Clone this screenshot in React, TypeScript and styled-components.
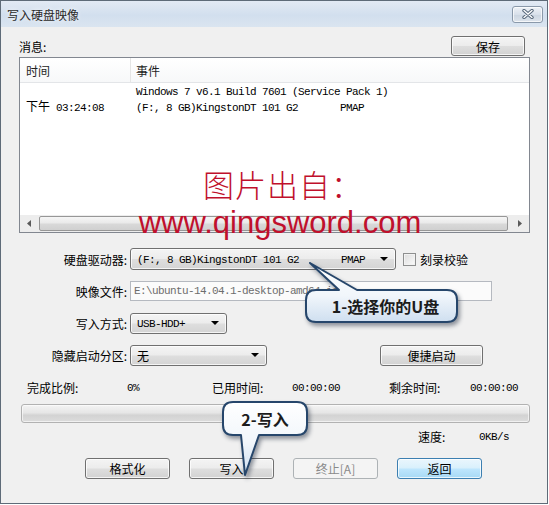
import React from "react";
import styled, { createGlobalStyle, css } from "styled-components";

const GlobalStyle = createGlobalStyle`
  html, body {
    margin: 0;
    padding: 0;
    background: #ffffff;
  }
  body {
    font-family: "Noto Sans CJK SC", "Liberation Sans", sans-serif;
    font-size: 12px;
    color: #000;
  }
  * {
    box-sizing: border-box;
  }
`;

const mono = css`
  font-family: "Liberation Mono", "Noto Sans CJK SC", monospace;
  font-size: 11px;
  letter-spacing: -0.6px;
  white-space: pre;
`;

const Window = styled.div`
  position: relative;
  width: 548px;
  height: 504px;
  border: 1px solid #5e6b78;
  background: #f0f0f0;
  display: flex;
  flex-direction: column;
  overflow: hidden;
`;

const TitleBar = styled.div`
  height: 26px;
  flex: none;
  display: flex;
  align-items: center;
  justify-content: space-between;
  padding: 0 4px 0 6px;
  background: linear-gradient(to bottom, #e2eaf4 0%, #d2dfee 55%, #dae5f0 100%);
`;

const TitleText = styled.span`
  font-size: 12px;
  color: #2a2a2a;
  text-shadow: 0 0 4px #ffffff;
`;

const CloseButton = styled.div`
  width: 31px;
  height: 17px;
  border: 1px solid #8a99aa;
  border-radius: 3px;
  background: linear-gradient(to bottom, #eef2f7, #d8e0ea 50%, #cbd5e1 51%, #dde4ec);
  display: flex;
  align-items: center;
  justify-content: center;
  box-shadow: inset 0 0 0 1px rgba(255, 255, 255, 0.7);
`;

const Body = styled.div`
  flex: 1;
  display: flex;
  flex-direction: column;
  padding: 9px 17px 0 18px;
`;

const HeaderRow = styled.div`
  height: 20px;
  display: flex;
  align-items: center;
  justify-content: space-between;
  padding-right: 5px;
`;

type ButtonKind = "normal" | "focused" | "disabled";

const Button = styled.div<{ $width: number; $height?: number; $kind?: ButtonKind; $offset?: number }>`
  width: ${p => p.$width}px;
  height: ${p => p.$height ?? 21}px;
  margin-left: ${p => p.$offset ?? 0}px;
  display: flex;
  align-items: center;
  justify-content: center;
  font-size: 12px;
  border-radius: 3px;
  border: 1px solid #707070;
  color: #000;
  background: linear-gradient(to bottom, #f4f4f4 0%, #ececec 48%, #dedede 52%, #d2d2d2 100%);
  box-shadow: inset 0 0 0 1px rgba(255, 255, 255, 0.75);
  ${p => p.$kind === "focused" && css`
    border-color: #3c7fb1;
    background: linear-gradient(to bottom, #eaf6fd 0%, #d9f0fc 48%, #bee6fd 52%, #a7d9f5 100%);
  `}
  ${p => p.$kind === "disabled" && css`
    border-color: #adb2b5;
    background: #f4f4f4;
    color: #8a8a8a;
    box-shadow: none;
  `}
`;

const ListBox = styled.div`
  margin-top: 1px;
  height: 176px;
  border: 1px solid #828790;
  background: #ffffff;
  display: flex;
  flex-direction: column;
`;

const ListHeader = styled.div`
  height: 25px;
  display: grid;
  grid-template-columns: 110px 1fr;
  background: linear-gradient(to bottom, #ffffff, #f7f8f9);
  border-bottom: 1px solid #e3e5e8;
`;

const HeaderCell = styled.div<{ $divider?: boolean }>`
  display: flex;
  align-items: center;
  padding-left: ${p => (p.$divider ? 5 : 6)}px;
  border-left: ${p => (p.$divider ? "1px solid #e5e5e5" : "none")};
  color: #1e1e1e;
`;

const ListContent = styled.div`
  flex: 1;
  padding-top: 1px;
`;

const LogRow = styled.div`
  display: grid;
  grid-template-columns: 111px 1fr;
  line-height: 16px;
`;

const TimeCell = styled.div`
  ${mono};
  align-self: end;
  padding-left: 6px;
`;

const TimeWord = styled.span`
  font-family: "Noto Sans CJK SC", sans-serif;
  font-size: 12px;
  letter-spacing: 0;
`;

const EventCell = styled.div`
  ${mono};
  padding-left: 5px;
`;

const HScroll = styled.div`
  height: 17px;
  display: flex;
  align-items: stretch;
  background: #ededed;
  padding: 0 1px;
`;

const ScrollArrow = styled.div`
  width: 17px;
  display: flex;
  align-items: center;
  justify-content: center;
`;

const ScrollThumb = styled.div`
  flex: 1;
  margin: 1px 3px 1px 1px;
  border: 1px solid #979797;
  border-radius: 2px;
  background: linear-gradient(to bottom, #f6f6f6 0%, #e9e9e9 48%, #d9d9d9 52%, #d0d0d0 100%);
`;

const FormRow = styled.div<{ $gap: number }>`
  margin-top: ${p => p.$gap}px;
  height: 22px;
  display: flex;
  align-items: center;
`;

const Label = styled.div`
  width: 108px;
  margin-right: 3px;
  text-align: right;
`;

const Combo = styled.div<{ $width: number; $height: number }>`
  width: ${p => p.$width}px;
  height: ${p => p.$height}px;
  display: flex;
  align-items: center;
  justify-content: space-between;
  padding: 0 7px 0 6px;
  border: 1px solid #707070;
  border-radius: 3px;
  background: linear-gradient(to bottom, #f4f4f4 0%, #ececec 48%, #dedede 52%, #d4d4d4 100%);
  box-shadow: inset 0 0 0 1px rgba(255, 255, 255, 0.75);
`;

const ComboText = styled.span<{ $mono?: boolean }>`
  ${p => p.$mono && mono};
  padding-top: 1px;
`;

const ComboArrow = styled.span`
  width: 0;
  height: 0;
  border-left: 4px solid transparent;
  border-right: 4px solid transparent;
  border-top: 4px solid #000;
`;

const Check = styled.div`
  width: 13px;
  height: 13px;
  margin: 0 4px 0 7px;
  border: 1px solid #8e8f8f;
  background: linear-gradient(135deg, #dcdcdc, #fbfbfb);
  box-shadow: inset 0 0 0 1px #f2f2f2;
`;

const PathInput = styled.div`
  ${mono};
  width: 362px;
  height: 20px;
  display: flex;
  align-items: center;
  padding-left: 3px;
  border: 1px solid #b5b9c0;
  background: #fbfbfb;
  color: #6d6d6d;
  overflow: hidden;
`;

const StatsRow = styled.div<{ $gap: number; $cols: string; $indent: number }>`
  margin-top: ${p => p.$gap}px;
  height: 16px;
  padding-left: ${p => p.$indent}px;
  display: grid;
  grid-template-columns: ${p => p.$cols};
  align-items: center;
`;

const Value = styled.span`
  ${mono};
`;

const Progress = styled.div`
  margin: 9px 0 0 2px;
  height: 19px;
  border: 1px solid #b2b2b2;
  border-radius: 3px;
  background: linear-gradient(to bottom, #f4f4f4 0%, #e6e6e6 45%, #d3d3d3 60%, #dcdcdc 100%);
  box-shadow: inset 0 0 0 1px rgba(255, 255, 255, 0.6);
`;

const ButtonRow = styled.div`
  margin: 14px 0 0 66px;
  display: flex;
  gap: 19px;
`;

const Watermark = styled.div`
  position: absolute;
  left: 134px;
  top: 160px;
  width: 290px;
  display: flex;
  flex-direction: column;
  align-items: center;
  color: #c0102c;
  pointer-events: none;
`;

const WatermarkTitle = styled.div`
  font-family: "Noto Sans CJK SC", sans-serif;
  font-size: 31px;
  font-weight: 300;
  line-height: 46px;
  padding-left: 6px;
  letter-spacing: 1px;
`;

const WatermarkUrl = styled.div`
  font-family: "Liberation Sans", Arial, sans-serif;
  font-size: 31px;
  line-height: 31px;
`;

const CalloutWrap = styled.div<{ $x: number; $y: number; $w: number; $h: number }>`
  position: absolute;
  left: ${p => p.$x}px;
  top: ${p => p.$y}px;
  width: ${p => p.$w}px;
  height: ${p => p.$h}px;
  pointer-events: none;

  svg {
    position: absolute;
    inset: 0;
    overflow: visible;
    filter: drop-shadow(2px 3px 2px rgba(20, 30, 50, 0.45));
  }
`;

const CalloutText = styled.div<{ $box: [number, number, number, number] }>`
  position: absolute;
  left: ${p => p.$box[0]}px;
  top: ${p => p.$box[1]}px;
  width: ${p => p.$box[2]}px;
  height: ${p => p.$box[3]}px;
  display: flex;
  align-items: center;
  justify-content: center;
  font-family: "Noto Sans CJK SC", "Liberation Sans", sans-serif;
  font-size: 16px;
  font-weight: 700;
  color: #1c1c1c;
`;

const Callout: React.FC<{
  x: number;
  y: number;
  w: number;
  h: number;
  path: string;
  box: [number, number, number, number];
  id: string;
  children: React.ReactNode;
}> = ({ x, y, w, h, path, box, id, children }) => (
  <CalloutWrap $x={x} $y={y} $w={w} $h={h}>
    <svg width={w} height={h} viewBox={`0 0 ${w} ${h}`}>
      <defs>
        <linearGradient id={id} x1="0" y1="0" x2="0" y2="1">
          <stop offset="0" stopColor="#ffffff" />
          <stop offset="0.55" stopColor="#f1f6fb" />
          <stop offset="1" stopColor="#cfdff0" />
        </linearGradient>
      </defs>
      <path d={path} fill={`url(#${id})`} stroke="#26466b" strokeWidth="2" strokeLinejoin="round" />
    </svg>
    <CalloutText $box={box}>{children}</CalloutText>
  </CalloutWrap>
);

export default function App() {
  return (
    <>
      <GlobalStyle />
      <Window>
        <TitleBar>
          <TitleText>写入硬盘映像</TitleText>
          <CloseButton>
            <svg width="14" height="10" viewBox="0 0 14 10">
              <path d="M3 1.5 L11 8.5 M11 1.5 L3 8.5" stroke="#56677a" strokeWidth="3.4" strokeLinecap="round" />
              <path d="M3 1.5 L11 8.5 M11 1.5 L3 8.5" stroke="#ffffff" strokeWidth="1.4" strokeLinecap="round" />
            </svg>
          </CloseButton>
        </TitleBar>

        <Body>
          <HeaderRow>
            <span>消息:</span>
            <Button $width={74} $height={20}>保存</Button>
          </HeaderRow>

          <ListBox>
            <ListHeader>
              <HeaderCell>时间</HeaderCell>
              <HeaderCell $divider>事件</HeaderCell>
            </ListHeader>
            <ListContent>
              <LogRow>
                <TimeCell><TimeWord>下午</TimeWord> 03:24:08</TimeCell>
                <EventCell>
                  <div>Windows 7 v6.1 Build 7601 (Service Pack 1)</div>
                  <div>{"(F:, 8 GB)KingstonDT 101 G2       PMAP"}</div>
                </EventCell>
              </LogRow>
            </ListContent>
            <HScroll>
              <ScrollArrow>
                <svg width="5" height="7" viewBox="0 0 5 7"><path d="M4 0 L0 3.5 L4 7 Z" fill="#5a5a5a" /></svg>
              </ScrollArrow>
              <ScrollThumb />
              <ScrollArrow>
                <svg width="5" height="7" viewBox="0 0 5 7"><path d="M1 0 L5 3.5 L1 7 Z" fill="#5a5a5a" /></svg>
              </ScrollArrow>
            </HScroll>
          </ListBox>

          <FormRow $gap={15}>
            <Label>硬盘驱动器:</Label>
            <Combo $width={266} $height={22}>
              <ComboText $mono>{"(F:, 8 GB)KingstonDT 101 G2       PMAP"}</ComboText>
              <ComboArrow />
            </Combo>
            <Check />
            <span>刻录校验</span>
          </FormRow>

          <FormRow $gap={10}>
            <Label>映像文件:</Label>
            <PathInput>{"E:\\ubuntu-14.04.1-desktop-amd64.iso"}</PathInput>
          </FormRow>

          <FormRow $gap={10}>
            <Label>写入方式:</Label>
            <Combo $width={97} $height={21}>
              <ComboText $mono>USB-HDD+</ComboText>
              <ComboArrow />
            </Combo>
          </FormRow>

          <FormRow $gap={10}>
            <Label>隐藏启动分区:</Label>
            <Combo $width={137} $height={21}>
              <ComboText>无</ComboText>
              <ComboArrow />
            </Combo>
            <Button $width={103} $offset={113}>便捷启动</Button>
          </FormRow>

          <StatsRow $gap={13} $indent={8} $cols="100px 85px 80px 97px 81px 1fr">
            <span>完成比例:</span>
            <Value>0%</Value>
            <span>已用时间:</span>
            <Value>00:00:00</Value>
            <span>剩余时间:</span>
            <Value>00:00:00</Value>
          </StatsRow>

          <Progress />

          <StatsRow $gap={5} $indent={399} $cols="61px 1fr">
            <span>速度:</span>
            <Value>0KB/s</Value>
          </StatsRow>

          <ButtonRow>
            <Button $width={85}>格式化</Button>
            <Button $width={85}>写入</Button>
            <Button $width={85} $kind="disabled">终止[A]</Button>
            <Button $width={85} $kind="focused">返回</Button>
          </ButtonRow>
        </Body>

        <Watermark>
          <WatermarkTitle>图片出自：</WatermarkTitle>
          <WatermarkUrl>www.qingsword.com</WatermarkUrl>
        </Watermark>

        <Callout
          id="callout1"
          x={300}
          y={258}
          w={162}
          h={70}
          path="M 15 31 L 38 31 L 9 4 L 56 31 L 146 31 Q 156 31 156 41 L 156 53 Q 156 63 146 63 L 15 63 Q 5 63 5 53 L 5 41 Q 5 31 15 31 Z"
          box={[9, 31, 151, 32]}
        >
          1-选择你的U盘
        </Callout>

        <Callout
          id="callout2"
          x={215}
          y={396}
          w={100}
          h={82}
          path="M 17 5 L 81 5 Q 91 5 91 15 L 91 28 Q 91 38 81 38 L 43 38 L 29 78 L 25 38 L 17 38 Q 7 38 7 28 L 7 15 Q 7 5 17 5 Z"
          box={[7, 5, 84, 33]}
        >
          2-写入
        </Callout>
      </Window>
    </>
  );
}
